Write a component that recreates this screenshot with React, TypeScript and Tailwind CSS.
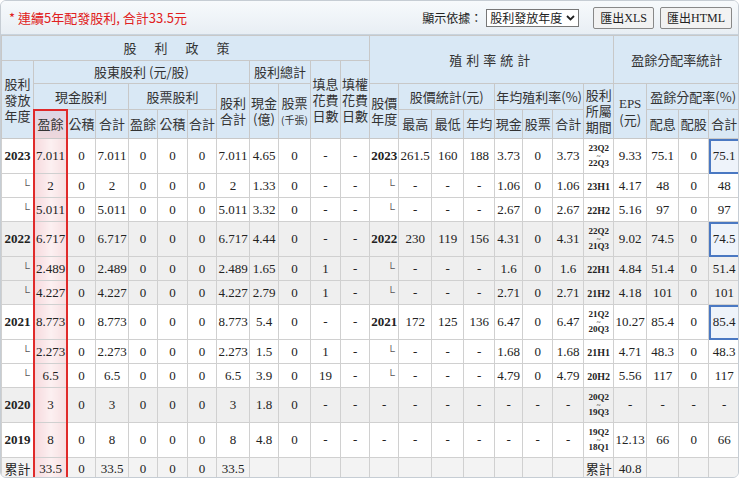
import React from "react";

const W = [32,34,28,33,29,30,29,33,29,32,30,29,29,33,32,31,28,30,31,30,33,32,30,31];
type Row = { y: string; c: string[]; d: string[]; per: string; tail: string[]; gray?: boolean; big?: boolean; box?: boolean; sub?: boolean };

const rows: Row[] = [
  { y: "2023", c: ["7.011","0","7.011","0","0","0","7.011","4.65","0","-","-"], d: ["2023","261.5","160","188","3.73","0","3.73"], per: "23Q2~22Q3", tail: ["9.33","75.1","0","75.1"], big: true, box: true },
  { y: "└", c: ["2","0","2","0","0","0","2","1.33","0","-","-"], d: ["└","-","-","-","1.06","0","1.06"], per: "23H1", tail: ["4.17","48","0","48"], sub: true },
  { y: "└", c: ["5.011","0","5.011","0","0","0","5.011","3.32","0","-","-"], d: ["└","-","-","-","2.67","0","2.67"], per: "22H2", tail: ["5.16","97","0","97"], sub: true },
  { y: "2022", c: ["6.717","0","6.717","0","0","0","6.717","4.44","0","-","-"], d: ["2022","230","119","156","4.31","0","4.31"], per: "22Q2~21Q3", tail: ["9.02","74.5","0","74.5"], big: true, box: true, gray: true },
  { y: "└", c: ["2.489","0","2.489","0","0","0","2.489","1.65","0","1","-"], d: ["└","-","-","-","1.6","0","1.6"], per: "22H1", tail: ["4.84","51.4","0","51.4"], gray: true, sub: true },
  { y: "└", c: ["4.227","0","4.227","0","0","0","4.227","2.79","0","1","-"], d: ["└","-","-","-","2.71","0","2.71"], per: "21H2", tail: ["4.18","101","0","101"], gray: true, sub: true },
  { y: "2021", c: ["8.773","0","8.773","0","0","0","8.773","5.4","0","-","-"], d: ["2021","172","125","136","6.47","0","6.47"], per: "21Q2~20Q3", tail: ["10.27","85.4","0","85.4"], big: true, box: true },
  { y: "└", c: ["2.273","0","2.273","0","0","0","2.273","1.5","0","1","-"], d: ["└","-","-","-","1.68","0","1.68"], per: "21H1", tail: ["4.71","48.3","0","48.3"], sub: true },
  { y: "└", c: ["6.5","0","6.5","0","0","0","6.5","3.9","0","19","-"], d: ["└","-","-","-","4.79","0","4.79"], per: "20H2", tail: ["5.56","117","0","117"], sub: true },
  { y: "2020", c: ["3","0","3","0","0","0","3","1.8","0","-","-"], d: ["-","-","-","-","-","-","-"], per: "20Q2~19Q3", tail: ["-","-","-","-"], big: true, gray: true },
  { y: "2019", c: ["8","0","8","0","0","0","8","4.8","0","-","-"], d: ["-","-","-","-","-","-","-"], per: "19Q2~18Q1", tail: ["12.13","66","0","66"], big: true },
];

const th = "border border-[#c8c8c8] font-normal text-[#333] leading-[16px] px-0";
const td = "border border-[#d0d0d0] text-center text-[#222] px-0";
const pink = " bg-gradient-to-r from-[#f6d9dd] via-[#fcf0f1] to-[#f6dde0]";

function Per({ p }: { p: string }) {
  const parts = p.split("~");
  if (parts.length === 1) return <span className="font-bold text-[10px]">{p}</span>;
  return (
    <div className="font-bold text-[9px] leading-[9px] flex flex-col items-center">
      <span>{parts[0]}</span><span className="text-[7px] leading-[6px]">~</span><span>{parts[1]}</span>
    </div>
  );
}

export default function App() {
  return (
    <div className="w-[740px] h-[479px] bg-white overflow-hidden" style={{ fontFamily: '"Liberation Serif","Noto Sans CJK TC",serif' }}>
      <div className="relative border border-[#c6cdd4] rounded-md overflow-hidden w-[739px] h-[478px] bg-[#f3f6f9]">
        <div className="h-[34px] flex items-center justify-between pl-[8px] pr-[6px] bg-gradient-to-b from-[#f7fafc] to-[#e8eef4] border-b border-[#c8d3dd]">
          <span className="text-[#e02020] text-[13px]" style={{ fontFamily: '"Noto Sans CJK TC",sans-serif' }}>* 連續5年配發股利, 合計33.5元</span>
          <div className="flex items-center gap-[4px] text-[12px] text-[#222]" style={{ fontFamily: '"Noto Sans CJK TC",sans-serif' }}>
            <span>顯示依據：</span>
            <span className="border border-[#777] bg-white px-[3px] h-[18px] flex items-center gap-[4px] text-[12px]">股利發放年度
              <svg width="9" height="6" viewBox="0 0 9 6"><path d="M1 1l3.5 3.5L8 1" stroke="#222" strokeWidth="1.8" fill="none"/></svg>
            </span>
            <span className="ml-[10px] border border-[#888] rounded-[2px] bg-[#f2f2f2] px-[6px] h-[22px] flex items-center">匯出<span style={{ fontFamily: '"Liberation Serif",serif' }}>XLS</span></span>
            <span className="ml-[2px] border border-[#888] rounded-[2px] bg-[#f2f2f2] px-[6px] h-[22px] flex items-center">匯出<span style={{ fontFamily: '"Liberation Serif",serif' }}>HTML</span></span>
          </div>
        </div>
        <table className="table-fixed border-collapse text-[13px]" style={{ width: 738 }}>
          <colgroup>{W.map((w, i) => <col key={i} style={{ width: w }} />)}</colgroup>
          <thead className="bg-[#d9e8f5]" style={{ fontFamily: '"Noto Sans CJK TC",sans-serif' }}>
            <tr className="h-[25px]">
              <th colSpan={12} className={th + " font-bold tracking-[18px] text-[13px]"}>股利政策</th>
              <th colSpan={8} rowSpan={2} className={th + " font-bold tracking-[4px]"}>殖利率統計</th>
              <th colSpan={4} rowSpan={2} className={th + " font-bold"}>盈餘分配率統計</th>
            </tr>
            <tr className="h-[23px]">
              <th rowSpan={3} className={th}>股利<br />發放<br />年度</th>
              <th colSpan={7} className={th}>股東股利 (元/股)</th>
              <th colSpan={2} className={th}>股利總計</th>
              <th rowSpan={3} className={th}>填息<br />花費<br />日數</th>
              <th rowSpan={3} className={th}>填權<br />花費<br />日數</th>
            </tr>
            <tr className="h-[26px]">
              <th colSpan={3} className={th}>現金股利</th>
              <th colSpan={3} className={th}>股票股利</th>
              <th rowSpan={2} className={th}>股利<br />合計</th>
              <th rowSpan={2} className={th}>現金<br />(億)</th>
              <th rowSpan={2} className={th}>股票<br /><span className="text-[10px]">(千張)</span></th>
              <th rowSpan={2} className={th}>股價<br />年度</th>
              <th colSpan={3} className={th}>股價統計(元)</th>
              <th colSpan={3} className={th}>年均殖利率(%)</th>
              <th rowSpan={2} className={th}>股利<br />所屬<br />期間</th>
              <th rowSpan={2} className={th}><span style={{ fontFamily: '"Liberation Serif",serif' }}>EPS</span><br />(元)</th>
              <th colSpan={3} className={th}>盈餘分配率(%)</th>
            </tr>
            <tr className="h-[29px]">
              {["盈餘","公積","合計","盈餘","公積","合計"].map((t, i) => <th key={i} className={th + (i === 0 ? " bg-gradient-to-b from-[#dcd6e4] to-[#eed7dc]" : "")}>{t}</th>)}
              {["最高","最低","年均","現金","股票","合計"].map((t, i) => <th key={i} className={th}>{t}</th>)}
              {["配息","配股","合計"].map((t, i) => <th key={i} className={th}>{t}</th>)}
            </tr>
          </thead>
          <tbody>
            {rows.map((r, i) => (
              <tr key={i} className={(r.gray ? "bg-[#efefef] " : "bg-white ") + (r.big ? "h-[35px]" : "h-[24px]")}>
                <td className={td + (r.sub ? " text-right pr-[3px] text-[#555] text-[11px]" : " font-bold")}>{r.y}</td>
                {r.c.map((v, j) => <td key={j} className={td + (j === 0 ? pink : "")}>{v}</td>)}
                {r.d.map((v, j) => <td key={j} className={td + (j === 0 ? (r.sub ? " text-right pr-[3px] text-[#555] text-[11px]" : v === "-" ? "" : " font-bold") : "")}>{v}</td>)}
                <td className={td}><Per p={r.per} /></td>
                {r.tail.map((v, j) => (
                  <td key={j} className={td + (j === 3 && r.box ? " bg-[#eef3fa] outline outline-2 -outline-offset-2 outline-[#4a78c2]" : "")}>{v}</td>
                ))}
              </tr>
            ))}
            <tr className="h-[23px] bg-[#f3f3f3]">
              <td className={td} style={{ fontFamily: '"Noto Sans CJK TC",sans-serif' }}>累計</td>
              {["33.5","0","33.5","0","0","0","33.5","","","",""].map((v, j) => <td key={j} className={td + (j === 0 ? pink : "")}>{v}</td>)}
              {["","","","","","",""].map((v, j) => <td key={j} className={td}>{v}</td>)}
              <td className={td} style={{ fontFamily: '"Noto Sans CJK TC",sans-serif' }}>累計</td>
              <td className={td}>40.8</td>
              <td className={td}></td><td className={td}></td><td className={td}></td>
            </tr>
          </tbody>
        </table>
        <div className="absolute left-[32px] top-[108px] w-[35px] h-[371px] border-2 border-[#e02a2a] pointer-events-none" />
      </div>
    </div>
  );
}
